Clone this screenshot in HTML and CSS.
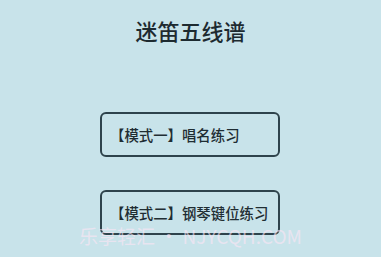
FILE: index.html
```html
<!DOCTYPE html>
<html lang="zh">
<head>
<meta charset="utf-8">
<link rel="stylesheet" href="styles.css">
</head>
<body>
<div class="page">
  <h1 class="title">迷笛五线谱</h1>
  <div class="modes">
    <div class="mode">【模式一】唱名练习</div>
    <div class="mode">【模式二】钢琴键位练习</div>
  </div>
  <div class="watermark">乐享轻汇 • NJYCQH.COM</div>
</div>
</body>
</html>
```
FILE: styles.css
```css
html, body {
  margin: 0;
  padding: 0;
  background: #c8e3ea;
}
.page {
  position: relative;
  width: 381px;
  height: 257px;
  overflow: hidden;
  font-family: "Noto Sans CJK SC", "Noto Sans", sans-serif;
  color: #1d2a30;
}
.title {
  margin: 0;
  padding-top: 18px;
  text-align: center;
  font-size: 22px;
  line-height: 24px;
  font-weight: 500;
  letter-spacing: 0;
}
.modes {
  display: flex;
  flex-direction: column;
  gap: 33px;
  margin: 70px 0 0 100px;
}
.mode {
  box-sizing: border-box;
  width: 180px;
  height: 45px;
  border: 2px solid #2e434c;
  border-radius: 6px;
  display: flex;
  align-items: center;
  padding-left: 8px;
  font-size: 14.4px;
  font-weight: 500;
  color: #1f2d33;
}
.watermark {
  position: absolute;
  left: 79px;
  top: 223px;
  font-family: "Noto Sans CJK SC", "Noto Sans", sans-serif;
  font-size: 19px;
  line-height: 26px;
  color: rgba(255, 230, 245, 0.6);
  white-space: nowrap;
}
```
